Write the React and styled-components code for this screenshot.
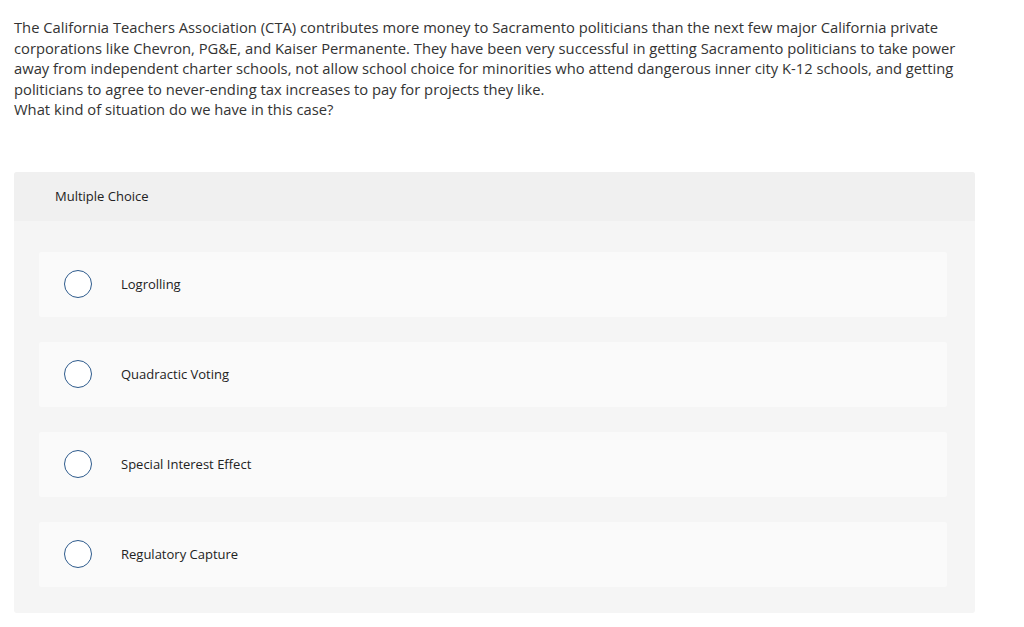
import React from "react";
import styled, { createGlobalStyle } from "styled-components";

const Global = createGlobalStyle`
  body {
    margin: 0;
    background: #ffffff;
    font-family: "Open Sans", Lato, sans-serif;
    color: #333333;
  }
`;

const options = [
  "Logrolling",
  "Quadractic Voting",
  "Special Interest Effect",
  "Regulatory Capture",
];

const App = () => {
  return (
    <Page>
      <Global />
      <Question>
        The California Teachers Association (CTA) contributes more money to
        Sacramento politicians than the next few major California private
        corporations like Chevron, PG&amp;E, and Kaiser Permanente. They have
        been very successful in getting Sacramento politicians to take power
        away from independent charter schools, not allow school choice for
        minorities who attend dangerous inner city K-12 schools, and getting
        politicians to agree to never-ending tax increases to pay for projects
        they like.
        <br />
        What kind of situation do we have in this case?
      </Question>
      <Panel>
        <Header>Multiple Choice</Header>
        <Body>
          {options.map((o) => (
            <Option key={o}>
              <Radio />
              <Label>{o}</Label>
            </Option>
          ))}
        </Body>
      </Panel>
    </Page>
  );
};

export default App;

const Page = styled.div`
  padding: 17px 14px 0 14px;
  width: 1024px;
  box-sizing: border-box;
`;

const Question = styled.div`
  width: 962px;
  font-size: 14.75px;
  line-height: 20.5px;
  color: #333333;
`;

const Panel = styled.div`
  margin-top: 52px;
  width: 961px;
  border-radius: 3px;
  overflow: hidden;
  background: #f5f5f5;
`;

const Header = styled.div`
  height: 49px;
  background: #f0f0f0;
  display: flex;
  align-items: center;
  padding-left: 41px;
  font-size: 13px;
  color: #222222;
`;

const Body = styled.div`
  padding: 31px 28px 26px 25px;
  display: flex;
  flex-direction: column;
  gap: 25px;
`;

const Option = styled.div`
  height: 65px;
  background: #fafafa;
  border-radius: 2px;
  display: flex;
  align-items: center;
  padding-left: 25px;
`;

const Radio = styled.span`
  width: 26px;
  height: 26px;
  border-radius: 50%;
  border: 1px solid #2d5a8c;
  background: #ffffff;
  flex-shrink: 0;
`;

const Label = styled.span`
  margin-left: 29px;
  font-size: 13px;
  color: #222222;
`;
